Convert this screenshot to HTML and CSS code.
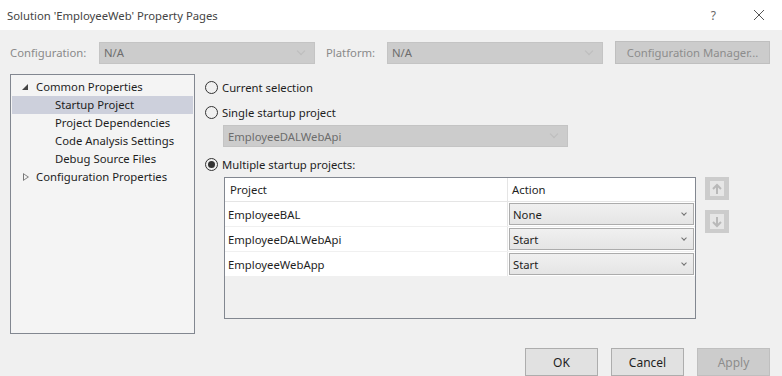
FILE: index.html
```html
<!DOCTYPE html>
<html lang="en">
<head>
  <meta charset="UTF-8">
  <title>Solution 'EmployeeWeb' Property Pages</title>
  <link rel="stylesheet" href="styles.css">
</head>
<body>
  <div class="titlebar">
    <span class="title">Solution 'EmployeeWeb' Property Pages</span>
    <span class="help">?</span>
    <svg class="close" width="12" height="12" viewBox="0 0 12 12">
      <path d="M1 1L11 11M11 1L1 11" stroke="#555" stroke-width="1" fill="none"/>
    </svg>
  </div>

  <div class="config-row">
    <span class="label">Configuration:</span>
    <div class="combo combo-config"><span>N/A</span><i class="chev"></i></div>
    <span class="label label-platform">Platform:</span>
    <div class="combo combo-platform"><span>N/A</span><i class="chev"></i></div>
    <div class="btn btn-disabled btn-manager">Configuration Manager...</div>
  </div>

  <div class="main">
    <div class="tree">
      <div class="node"><span class="arrow open"></span>Common Properties</div>
      <div class="node child selected">Startup Project</div>
      <div class="node child">Project Dependencies</div>
      <div class="node child">Code Analysis Settings</div>
      <div class="node child">Debug Source Files</div>
      <div class="node"><span class="arrow closed"></span>Configuration Properties</div>
    </div>

    <div class="panel">
      <div class="radio-row"><span class="radio"></span>Current selection</div>
      <div class="radio-row"><span class="radio"></span>Single startup project</div>
      <div class="combo combo-single"><span>EmployeeDALWebApi</span><i class="chev"></i></div>
      <div class="radio-row"><span class="radio checked"></span>Multiple startup projects:</div>

      <div class="grid-wrap">
        <div class="grid">
          <div class="grid-row head">
            <div class="cell name">Project</div>
            <div class="cell action">Action</div>
          </div>
          <div class="grid-row">
            <div class="cell name">EmployeeBAL</div>
            <div class="cell action"><div class="cell-combo">None<i class="chev dark"></i></div></div>
          </div>
          <div class="grid-row">
            <div class="cell name">EmployeeDALWebApi</div>
            <div class="cell action"><div class="cell-combo">Start<i class="chev dark"></i></div></div>
          </div>
          <div class="grid-row">
            <div class="cell name">EmployeeWebApp</div>
            <div class="cell action"><div class="cell-combo">Start<i class="chev dark"></i></div></div>
          </div>
        </div>
        <div class="movers">
          <div class="mover">
            <svg width="12" height="12" viewBox="0 0 12 12"><path d="M6 11V2M2 6L6 2L10 6" stroke="#b9b9b9" stroke-width="2" fill="none"/></svg>
          </div>
          <div class="mover">
            <svg width="12" height="12" viewBox="0 0 12 12"><path d="M6 1V10M2 6L6 10L10 6" stroke="#b9b9b9" stroke-width="2" fill="none"/></svg>
          </div>
        </div>
      </div>
    </div>
  </div>

  <div class="footer">
    <div class="btn">OK</div>
    <div class="btn">Cancel</div>
    <div class="btn btn-disabled">Apply</div>
  </div>
</body>
</html>
```

FILE: styles.css
```css
body {
  margin: 0;
  width: 782px;
  height: 376px;
  overflow: hidden;
  background: #f0f0f0;
  font-family: "Noto Sans", "Open Sans", sans-serif;
  font-size: 11.3px;
  color: #1e1e1e;
}
.titlebar {
  height: 30px;
  background: #fff;
  display: flex;
  align-items: center;
  padding-left: 7px;
}
.title {
  flex: 1;
  color: #444;
}
.help {
  color: #666;
  font-size: 12px;
  margin-right: 37px;
}
.close {
  margin-right: 17px;
}
.config-row {
  display: flex;
  align-items: center;
  padding: 11px 0 0 10px;
  height: 23px;
}
.label {
  color: #8a8a8a;
  width: 89px;
}
.label-platform {
  width: 61px;
  margin-left: 11px;
}
.combo {
  height: 22px;
  background: #cccccc;
  border: 1px solid #c4c4c4;
  box-sizing: border-box;
  display: flex;
  align-items: center;
  padding-left: 4px;
  color: #6d6d6d;
}
.combo span {
  flex: 1;
}
.combo-config,
.combo-platform {
  width: 216px;
}
.chev {
  width: 5px;
  height: 5px;
  border-right: 1px solid #bdbdbd;
  border-bottom: 1px solid #bdbdbd;
  transform: rotate(45deg);
  margin: 0 10px 4px 0;
}
.chev.dark {
  border-color: #707070;
  width: 3px;
  height: 3px;
  margin: 0 7px 3px 0;
}
.btn {
  height: 23px;
  border: 1px solid #adadad;
  background: #e1e1e1;
  box-sizing: border-box;
  display: flex;
  align-items: center;
  justify-content: center;
  color: #1e1e1e;
}
.btn-disabled {
  background: #cccccc;
  border-color: #bfbfbf;
  color: #8d8d8d;
}
.btn-manager {
  width: 155px;
  margin-left: 12px;
}
.main {
  display: flex;
  padding: 10px 0 0 10px;
}
.tree {
  width: 185px;
  height: 260px;
  box-sizing: border-box;
  border: 1px solid #828790;
  background: #f4f4f4;
  padding: 3px 1px;
}
.node {
  height: 18px;
  line-height: 18px;
  padding-left: 24px;
  position: relative;
}
.node.child {
  padding-left: 43px;
}
.node.selected {
  background: #cdd0dc;
}
.arrow {
  position: absolute;
  left: 10px;
  top: 6px;
  width: 0;
  height: 0;
}
.arrow.open {
  border-left: 6px solid transparent;
  border-bottom: 6px solid #444;
}
.arrow.closed {
  top: 5px;
  left: 11px;
  width: 6px;
  height: 8px;
  background: #777;
  clip-path: polygon(0 0, 100% 50%, 0 100%, 0 0, 1px 1.6px, 1px 6.4px, 4.6px 4px, 1px 1.6px);
}
.panel {
  margin-left: 10px;
  display: flex;
  flex-direction: column;
}
.radio-row {
  display: flex;
  align-items: center;
  height: 18px;
  margin-top: 4px;
}
.radio-row + .radio-row {
  margin-top: 7px;
}
.radio {
  width: 13px;
  height: 13px;
  box-sizing: border-box;
  border: 1px solid #333;
  border-radius: 50%;
  margin-right: 4px;
  position: relative;
}
.radio.checked::after {
  content: "";
  position: absolute;
  left: 2px;
  top: 2px;
  width: 7px;
  height: 7px;
  border-radius: 50%;
  background: #333;
}
.combo-single {
  width: 345px;
  margin: 4px 0 0 18px;
}
.combo + .radio-row {
  margin-top: 8px;
}
.grid-wrap {
  display: flex;
  margin: 4px 0 0 19px;
}
.grid {
  width: 472px;
  height: 142px;
  box-sizing: border-box;
  border: 1px solid #828790;
  background: #f0f0f0;
}
.grid-row {
  display: flex;
  height: 25px;
  background: #fff;
  border-bottom: 1px solid #f0f0f0;
  box-sizing: border-box;
}
.grid-row.head {
  height: 24px;
  border-bottom: 1px solid #e5e5e5;
}
.cell {
  display: flex;
  align-items: center;
}
.cell.name {
  width: 283px;
  padding-left: 3px;
  box-sizing: border-box;
  border-right: 1px solid #e5e5e5;
}
.cell.action {
  flex: 1;
  padding: 0 1px 0 1px;
}
.head .cell.name {
  padding-left: 5px;
}
.head .cell.action {
  padding-left: 4px;
}
.cell-combo {
  flex: 1;
  height: 22px;
  box-sizing: border-box;
  border: 1px solid #acacac;
  background: linear-gradient(#f0f0f0, #e5e5e5);
  display: flex;
  align-items: center;
  justify-content: space-between;
  padding-left: 3px;
}
.movers {
  display: flex;
  flex-direction: column;
  margin-left: 9px;
  gap: 10px;
}
.mover {
  width: 24px;
  height: 23px;
  background: #cccccc;
  display: flex;
  align-items: center;
  justify-content: center;
  position: relative;
}
.mover::before {
  content: "";
  position: absolute;
  left: 5px;
  top: 4px;
  width: 14px;
  height: 15px;
  background: #e6e6e6;
}
.mover svg {
  position: relative;
}
.footer {
  display: flex;
  justify-content: flex-end;
  gap: 13px;
  padding: 14px 12px 0 0;
}
.footer .btn {
  width: 73px;
  height: 28px;
  font-size: 12px;
}
```
